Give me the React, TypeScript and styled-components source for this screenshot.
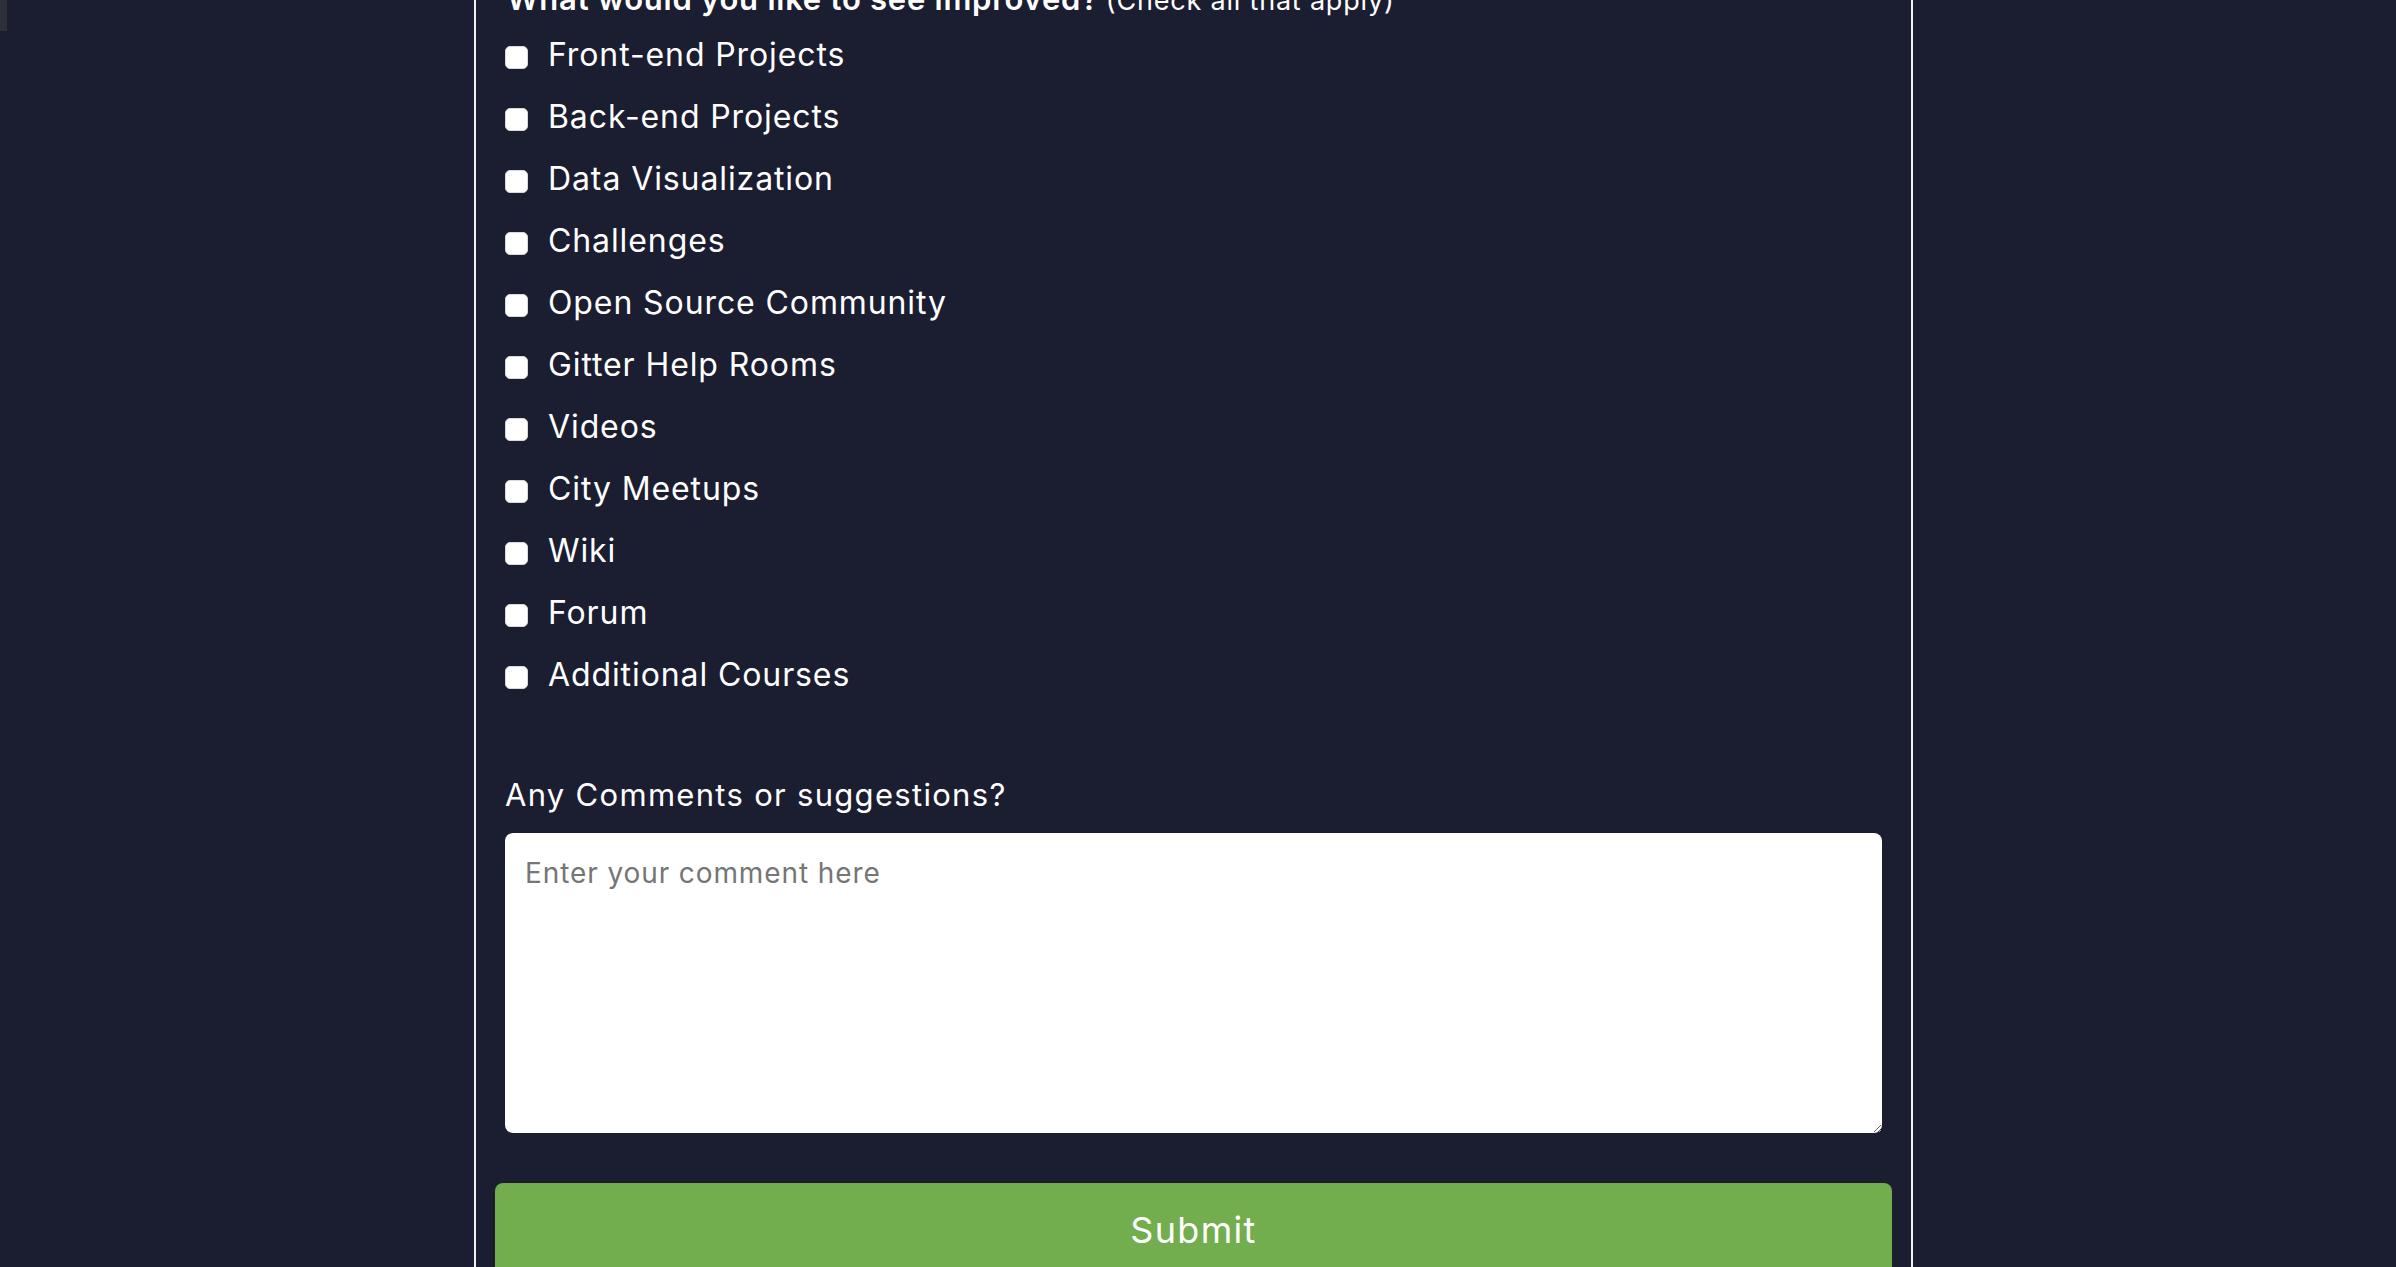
import React from "react";
import styled, { createGlobalStyle } from "styled-components";

const GlobalStyle = createGlobalStyle`
  html, body {
    margin: 0;
    padding: 0;
    background: #1b1d30;
    overflow: hidden;
  }
  body {
    font-family: Inter, "Open Sans", sans-serif;
    color: #ffffff;
  }
`;

const Page = styled.div`
  height: 1267px;
  overflow: hidden;
  padding-right: 9px;
  box-sizing: border-box;
`;

const ScrollThumb = styled.div`
  position: fixed;
  top: 0;
  left: 0;
  width: 7px;
  height: 31px;
  background: #2e3039;
`;

const Form = styled.form`
  width: 1439px;
  margin: -23px auto 0;
  box-sizing: border-box;
  border: 2px solid #f2f2f2;
  padding: 0 19px 120px;
  display: flex;
  flex-direction: column;
`;

const Legend = styled.div`
  height: 40px;
  line-height: 40px;
  padding: 0 12px;
  white-space: nowrap;
`;

const LegendMain = styled.span`
  font-size: 31px;
  font-weight: 600;
  letter-spacing: 0.75px;
`;

const LegendNote = styled.span`
  font-size: 27px;
  font-weight: 400;
  letter-spacing: 0.8px;
  margin-left: 7px;
`;

const OptionList = styled.div`
  margin-top: 6px;
  padding: 0 10px;
  display: flex;
  flex-direction: column;
`;

const Option = styled.label`
  height: 62px;
  display: flex;
  align-items: center;
  gap: 20px;
  font-size: 32px;
  font-weight: 400;
  letter-spacing: 0.9px;
  cursor: pointer;
`;

const Check = styled.input`
  appearance: none;
  -webkit-appearance: none;
  margin: 3px 0 0;
  width: 23px;
  height: 23px;
  border-radius: 5px;
  background: #ffffff;
  border: 1px solid #d9d9d9;
  box-sizing: border-box;
  flex: none;
`;

const OptionText = styled.span`
  line-height: 40px;
  margin-top: -3px;
`;

const CommentLabel = styled.label`
  margin-top: 68px;
  padding: 0 10px;
  font-size: 31px;
  line-height: 40px;
  font-weight: 400;
  letter-spacing: 1.3px;
`;

const CommentBox = styled.textarea`
  margin: 18px 10px 0;
  height: 300px;
  box-sizing: border-box;
  border: none;
  border-radius: 8px;
  padding: 23px 20px 20px;
  font-family: Inter, "Open Sans", sans-serif;
  font-size: 28px;
  letter-spacing: 0.9px;
  color: #222;
  background: #ffffff;
  outline: none;
  &::placeholder {
    color: #767676;
  }
`;

const SubmitButton = styled.button`
  margin-top: 50px;
  height: 94px;
  border: none;
  border-radius: 8px;
  background: #72ad4e;
  color: #ffffff;
  font-family: Inter, "Open Sans", sans-serif;
  font-size: 36px;
  font-weight: 400;
  letter-spacing: 1.3px;
  cursor: pointer;
`;

const options = [
  "Front-end Projects",
  "Back-end Projects",
  "Data Visualization",
  "Challenges",
  "Open Source Community",
  "Gitter Help Rooms",
  "Videos",
  "City Meetups",
  "Wiki",
  "Forum",
  "Additional Courses",
];

export default function App() {
  return (
    <Page>
      <GlobalStyle />
      <ScrollThumb />
      <Form onSubmit={(e) => e.preventDefault()}>
        <Legend>
          <LegendMain>What would you like to see improved?</LegendMain>
          <LegendNote>(Check all that apply)</LegendNote>
        </Legend>
        <OptionList>
          {options.map((o) => (
            <Option key={o}>
              <Check type="checkbox" name="improve" value={o} />
              <OptionText>{o}</OptionText>
            </Option>
          ))}
        </OptionList>
        <CommentLabel htmlFor="comments">Any Comments or suggestions?</CommentLabel>
        <CommentBox id="comments" placeholder="Enter your comment here" />
        <SubmitButton type="submit">Submit</SubmitButton>
      </Form>
    </Page>
  );
}
